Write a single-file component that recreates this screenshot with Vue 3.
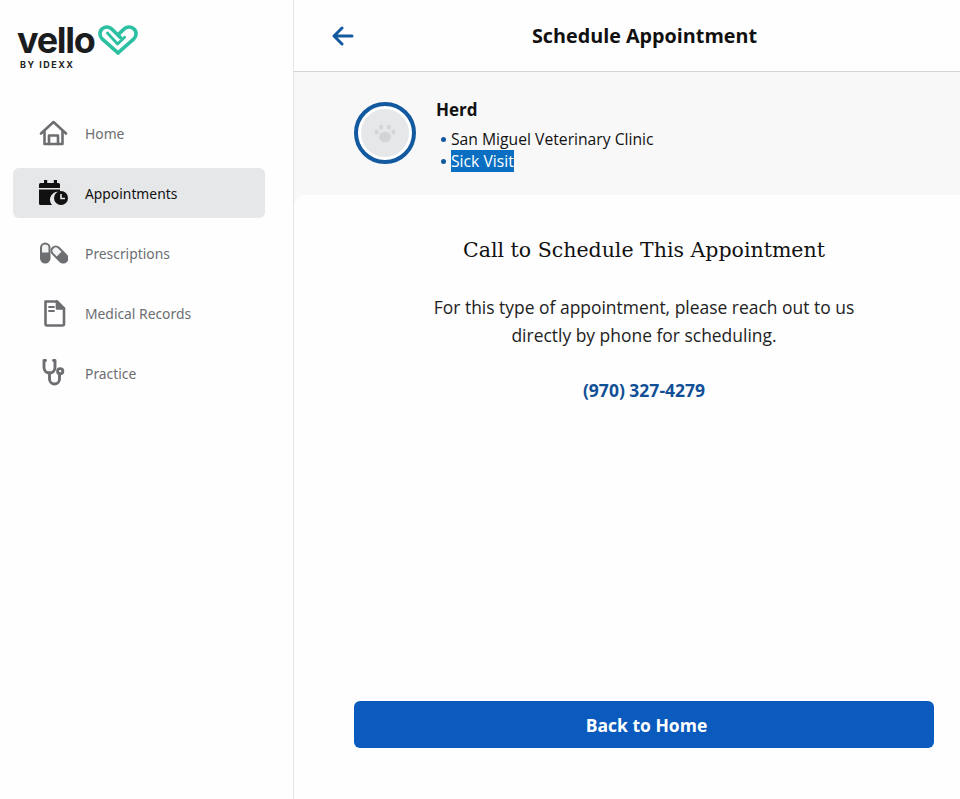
<script setup>
const items = [
  { label: 'Home', key: 'home' },
  { label: 'Appointments', key: 'cal', active: true },
  { label: 'Prescriptions', key: 'pill' },
  { label: 'Medical Records', key: 'doc' },
  { label: 'Practice', key: 'steth' },
]
</script>

<template>
  <div class="shell">
    <aside class="side">
      <div class="logo">
        <div class="logo-row">
          <span class="word">vello</span>
          <svg class="heart" viewBox="0 0 40 30" width="40" height="30" fill="none" stroke="#2cc0a2" stroke-linecap="round" stroke-linejoin="round">
            <path stroke-width="3.6" d="M20 27.8 L4.4 14.2 C1 11 1.2 6.2 4.4 3.6 C7.6 1.2 11.4 1.6 14 4.2 L22.4 12.6" />
            <path stroke-width="3.6" d="M20 27.8 L35.6 14.2 C39 11 38.8 6.2 35.6 3.6 C32.4 1.2 28.4 1.6 25.8 4.2 L20.4 9.4" />
            <path stroke-width="2.8" d="M9.4 8 L19.6 19 L26.6 12.2" />
          </svg>
        </div>
        <div class="by">BY IDEXX</div>
      </div>
      <nav class="nav">
        <div v-for="it in items" :key="it.key" class="item" :class="{ active: it.active }">
          <span class="ico">
            <svg v-if="it.key === 'home'" viewBox="0 0 30 30" width="30" height="30" fill="none" stroke="#6c6e71" stroke-width="2.6" stroke-linejoin="round" stroke-linecap="round">
              <path d="M3 15.5 L15.5 4 L28 15.5" />
              <path d="M6.5 13 V26 H24.5 V13" />
              <path d="M11 26 V17.5 H20 V26" />
            </svg>
            <svg v-else-if="it.key === 'cal'" viewBox="0 0 30 30" width="30" height="30">
              <path fill="#111" d="M1 6.5 a1.5 1.5 0 0 1 1.5 -1.5 H6 V2 h3.2 V5 h6.6 V2 H19 V5 h1.5 a1.5 1.5 0 0 1 1.5 1.5 V10 H1 Z" />
              <path fill="#111" d="M1 11.5 H22 V14 a8 8 0 0 0 -8 13 H2.5 A1.5 1.5 0 0 1 1 25.5 Z" />
              <circle cx="23" cy="20" r="7" fill="#111" />
              <path d="M23 16 V20.5 H27" fill="none" stroke="#e6e7e9" stroke-width="1.6" />
            </svg>
            <svg v-else-if="it.key === 'pill'" viewBox="0 0 30 30" width="30" height="30">
              <rect x="2" y="4.5" width="10.5" height="21" rx="5.25" fill="#6c6e71" />
              <path d="M4 14.5 V9.8 a3.25 3.25 0 0 1 6.5 0 V14.5 Z" fill="#f2f2f2" />
              <g transform="rotate(-45 21.5 16.5)">
                <rect x="16.2" y="6" width="10.6" height="21" rx="5.3" fill="#6c6e71" />
                <path d="M18.2 16 V11.3 a3.3 3.3 0 0 1 6.6 0 V16 Z" fill="#f2f2f2" />
              </g>
            </svg>
            <svg v-else-if="it.key === 'doc'" viewBox="0 0 30 30" width="30" height="30" fill="none" stroke="#6c6e71" stroke-width="2.6" stroke-linejoin="round" stroke-linecap="round">
              <path d="M7.5 3.5 H19 L26 10.5 V26 a1.5 1.5 0 0 1 -1.5 1.5 H9 A1.5 1.5 0 0 1 7.5 26 Z" />
              <path d="M11 9 H16 M11 13 H16" stroke-width="1.8" />
              <path d="M19 3.5 V10.5 H26" fill="#6c6e71" />
            </svg>
            <svg v-else viewBox="0 0 30 30" width="30" height="30" fill="none" stroke="#6c6e71" stroke-width="2.9" stroke-linecap="round" stroke-linejoin="round">
              <path d="M7.5 2.5 H6 V9.5 a5.5 5.5 0 0 0 11 0 V2.5 H15.5" />
              <path d="M11.5 15 V21 a5 5 0 0 0 10 0 V16" />
              <circle cx="22.2" cy="13.2" r="2.6" />
            </svg>
          </span>
          <span class="lbl">{{ it.label }}</span>
        </div>
      </nav>
    </aside>

    <main class="main">
      <header class="top">
        <svg class="back" viewBox="0 0 22 20" width="22" height="20" fill="none" stroke="#12599f" stroke-width="3" stroke-linecap="round" stroke-linejoin="round">
          <path d="M20 10 H2.5 M10 2 L2 10 L10 18" />
        </svg>
        <h1 class="title">Schedule Appointment</h1>
        <span></span>
      </header>

      <section class="band">
        <div class="avatar">
          <div class="avatar-in">
            <svg viewBox="0 0 24 24" width="24" height="24" fill="#d3d4d6">
              <ellipse cx="12" cy="16" rx="6" ry="5.2" />
              <ellipse cx="8.2" cy="6" rx="2" ry="2.6" />
              <ellipse cx="15.8" cy="6" rx="2" ry="2.6" />
              <ellipse cx="3.6" cy="11" rx="2" ry="2.6" />
              <ellipse cx="20.4" cy="11" rx="2" ry="2.6" />
            </svg>
          </div>
        </div>
        <div class="info">
          <div class="name">Herd</div>
          <ul class="list">
            <li><span class="dot"></span><span>San Miguel Veterinary Clinic</span></li>
            <li><span class="dot"></span><span class="sel">Sick Visit</span></li>
          </ul>
        </div>
      </section>

      <section class="panel">
        <h2 class="h2">Call to Schedule This Appointment</h2>
        <p class="copy">For this type of appointment, please reach out to us<br />directly by phone for scheduling.</p>
        <div class="phone">(970) 327-4279</div>
        <button class="cta" type="button">Back to Home</button>
      </section>
    </main>
  </div>
</template>

<style scoped>
.shell {
  display: flex;
  height: 799px;
  width: 960px;
  overflow: hidden;
  background: #fefefe;
  font-family: "Open Sans", "Noto Sans", sans-serif;
  color: #111;
}
.side {
  flex: none;
  box-sizing: border-box;
  border-right: 1px solid #e6e6e6;
  padding-left: 13px;
  width: 294px;
}
.logo {
  padding: 20px 0 0 4px;
  height: 88px;
  box-sizing: border-box;
}
.logo-row {
  display: flex;
  align-items: flex-start;
  height: 38px;
}
.word {
  font-family: Inter, sans-serif;
  font-weight: 700;
  font-size: 36px;
  line-height: 34px;
  margin-top: 3px;
  letter-spacing: -1.3px;
  color: #1b1c1e;
}
.heart {
  margin: 5px 0 0 4px;
}
.by {
  font-family: Inter, sans-serif;
  font-weight: 700;
  font-size: 9px;
  line-height: 10px;
  letter-spacing: 1.5px;
  margin: 2px 0 0 3px;
  color: #222;
}
.nav {
  display: flex;
  flex-direction: column;
  gap: 10px;
  padding-top: 20px;
  width: 252px;
}
.item {
  display: flex;
  align-items: center;
  height: 50px;
  padding-left: 25px;
  gap: 17px;
  border-radius: 6px;
  font-family: "Noto Sans", sans-serif;
  font-size: 13.85px;
  color: #6c6e71;
}
.item.active {
  background: #e6e7e9;
  color: #111;
}
.ico {
  display: flex;
  width: 30px;
  height: 30px;
}
.main {
  flex: 1;
  display: flex;
  flex-direction: column;
  min-width: 0;
}
.top {
  display: grid;
  grid-template-columns: 1fr auto 1fr;
  align-items: center;
  height: 71px;
  padding: 0 3px 0 38px;
  border-bottom: 1px solid #d4d4d4;
  background: #fefefe;
  flex: none;
}
.title {
  margin: 0;
  font-size: 19.75px;
  font-weight: 700;
  line-height: 28px;
  color: #111;
}
.band {
  display: flex;
  align-items: flex-start;
  gap: 20px;
  height: 135px;
  box-sizing: border-box;
  padding: 30px 0 0 60px;
  background: #f8f8f8;
  flex: none;
}
.avatar {
  width: 62px;
  height: 62px;
  box-sizing: border-box;
  border: 4px solid #12599f;
  border-radius: 50%;
  background: #fff;
  display: flex;
  align-items: center;
  justify-content: center;
  flex: none;
}
.avatar-in {
  width: 48px;
  height: 48px;
  border-radius: 50%;
  background: #e6e7e9;
  display: flex;
  align-items: center;
  justify-content: center;
}
.info {
  margin-top: -4px;
}
.name {
  font-size: 17px;
  font-weight: 700;
  line-height: 24px;
  color: #111;
}
.list {
  list-style: none;
  margin: 6px 0 0;
  padding: 0 0 0 5px;
  font-size: 15.7px;
  line-height: 22px;
}
.list li {
  display: flex;
  align-items: center;
  gap: 5px;
}
.dot {
  width: 5px;
  height: 5px;
  border-radius: 50%;
  background: #12599f;
  flex: none;
}
.sel {
  background: #0a6fc2;
  color: #fff;
}
.panel {
  flex: 1;
  display: flex;
  flex-direction: column;
  align-items: center;
  background: #fefefe;
  border-top-left-radius: 12px;
  margin-top: -12px;
  padding: 40px 26px 51px 60px;
  min-height: 0;
}
.h2 {
  margin: 0;
  font-family: "DejaVu Serif", serif;
  font-weight: 400;
  font-size: 20.5px;
  line-height: 30px;
  color: #111;
}
.copy {
  margin: 28px 0 0;
  text-align: center;
  font-size: 17.45px;
  line-height: 28px;
  color: #222;
}
.phone {
  margin-top: 28px;
  font-size: 17.5px;
  font-weight: 700;
  line-height: 26px;
  color: #114f97;
}
.cta {
  margin-top: auto;
  width: 100%;
  height: 47px;
  border: 0;
  border-radius: 6px;
  background: #0a5bbd;
  color: #fff;
  padding: 1px 0 0 5px;
  font-family: "Open Sans", sans-serif;
  font-size: 17.5px;
  font-weight: 700;
}
</style>
